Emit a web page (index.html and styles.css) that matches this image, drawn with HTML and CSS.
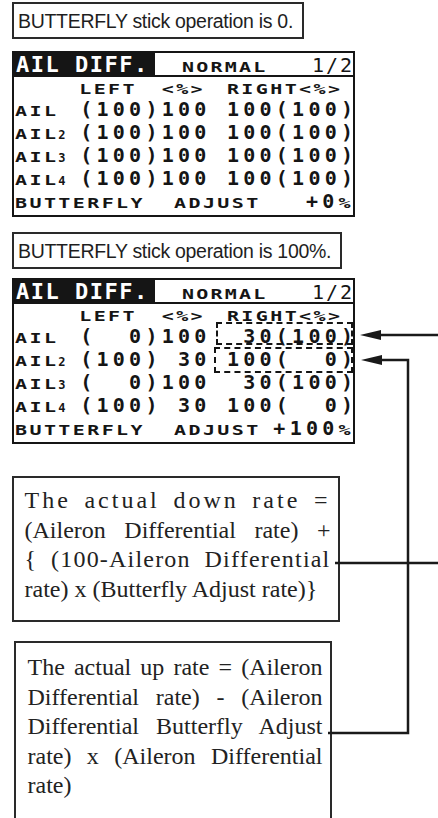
FILE: index.html
```html
<!DOCTYPE html>
<html lang="en">
<head>
    <meta charset="UTF-8">
    <meta name="viewport" content="width=device-width, initial-scale=1.0">
    <title>AIL DIFF. Butterfly adjust</title>
    <link rel="stylesheet" href="styles.css">
</head>
<body>
    <div class="page">
        <div class="note">BUTTERFLY stick operation is 0.</div>

        <div class="lcd">
            <div class="lcd-head">
                <span class="title">AIL DIFF.</span>
                <span class="mode"><span class="lb">NORMAL</span></span>
                <span class="pageno">1/2</span>
            </div>
            <div class="row row-top"><span class="lb lead">LEFT</span><span class="lb pct">&lt;%&gt;</span><span class="lb">RIGHT&lt;%&gt;</span></div>
            <div class="row"><span class="tag"><span class="lb">AIL</span></span>(100)100 100(100)</div>
            <div class="row"><span class="tag"><span class="lb">AIL</span><span class="xs">2</span></span>(100)100 100(100)</div>
            <div class="row"><span class="tag"><span class="lb">AIL</span><span class="xs">3</span></span>(100)100 100(100)</div>
            <div class="row"><span class="tag"><span class="lb">AIL</span><span class="xs">4</span></span>(100)100 100(100)</div>
            <div class="row bf-row"><span class="lb bf-name">BUTTERFLY</span><span class="lb">ADJUST</span><span class="value">+0<span class="lb">%</span></span></div>
        </div>

        <div class="note note-second">BUTTERFLY stick operation is 100%.</div>

        <div class="lcd">
            <div class="lcd-head">
                <span class="title">AIL DIFF.</span>
                <span class="mode"><span class="lb">NORMAL</span></span>
                <span class="pageno">1/2</span>
            </div>
            <div class="row row-top"><span class="lb lead">LEFT</span><span class="lb pct">&lt;%&gt;</span><span class="lb">RIGHT&lt;%&gt;</span></div>
            <div class="row"><span class="tag"><span class="lb">AIL</span></span>(  0)100  30(100)</div>
            <div class="row"><span class="tag"><span class="lb">AIL</span><span class="xs">2</span></span>(100) 30 100(  0)</div>
            <div class="row"><span class="tag"><span class="lb">AIL</span><span class="xs">3</span></span>(  0)100  30(100)</div>
            <div class="row"><span class="tag"><span class="lb">AIL</span><span class="xs">4</span></span>(100) 30 100(  0)</div>
            <div class="row bf-row"><span class="lb bf-name">BUTTERFLY</span><span class="lb">ADJUST</span><span class="value">+100<span class="lb">%</span></span></div>

            <!-- dashed marks around the right-hand values -->
            <div class="mark mark-down"></div>
            <div class="mark mark-up"></div>
        </div>

        <div class="box box-down">
            <span class="line line-wide">The actual down rate =</span>
            <span class="line">(Aileron Differential rate) +</span>
            <span class="line line-mid">{ (100-Aileron Differential</span>
            <span class="last">rate) x (Butterfly Adjust rate)}</span>
        </div>

        <div class="box box-up">
            <span class="line">The actual up rate = (Aileron</span>
            <span class="line">Differential rate) - (Aileron</span>
            <span class="line">Differential Butterfly Adjust</span>
            <span class="line">rate) x (Aileron Differential</span>
            <span class="last">rate)</span>
        </div>
    </div>

    <!-- leader lines from the explanations to the marked values -->
    <svg class="leaders" width="438" height="818" viewBox="0 0 438 818">
        <polygon points="360,335 381,330 381,340" />
        <line x1="380" y1="335" x2="438" y2="335" />
        <polygon points="361,360 382,355 382,365" />
        <polyline points="381,360 408,360 408,733 328,733" />
        <line x1="335" y1="563" x2="438" y2="563" />
    </svg>
</body>
</html>
```

FILE: styles.css
```css
:root {
    --cell: 16.3px;
    --ink: #151515;
}
body {
    margin: 0;
    background: #fff;
    color: #222;
    position: relative;
}
.page {
    padding: 2px 0 0 12px;
    height: 816px;
    overflow: hidden;
}
.note {
    width: fit-content;
    border: 2.5px solid #2a2a2a;
    padding: 0 9px 0 4px;
    height: 33px;
    line-height: 34px;
    font-family: "Liberation Sans", Arial, sans-serif;
    font-size: 19.5px;
    letter-spacing: -0.3px;
    color: #1e1e1e;
}
.note-second {
    margin-top: 15px;
}
.lcd {
    position: relative;
    width: 339px;
    margin-top: 12px;
    border: 2px solid var(--ink);
    padding-bottom: 2px;
    color: var(--ink);
}
.note-second + .lcd {
    margin-top: 9px;
}
.lcd-head {
    display: flex;
    align-items: baseline;
    height: 22px;
    border-bottom: 2px solid var(--ink);
    font-family: "DejaVu Sans Mono", monospace;
}
.title {
    width: 139px;
    height: 22px;
    padding-left: 2px;
    background: var(--ink);
    color: #fff;
    font-weight: bold;
    font-size: 22px;
    line-height: 23px;
    letter-spacing: 1.5px;
}
.mode {
    flex: 1;
    padding-left: 27px;
    font-weight: bold;
}
.mode .lb {
    letter-spacing: 2.2px;
}
.pageno {
    font-size: 20px;
    letter-spacing: 2px;
    margin-right: -1px;
}
.row {
    height: 23px;
    line-height: 23px;
    padding-left: 1px;
    white-space: pre;
    font-family: "DejaVu Sans Mono", monospace;
    font-weight: bold;
    font-size: 20px;
    letter-spacing: calc(var(--cell) - 0.602em);
}
.row-top {
    height: 21px;
    line-height: 21px;
}
/* small LCD letters: wide glyphs, squashed in height */
.lb {
    display: inline-block;
    font-size: 20px;
    line-height: 23px;
    letter-spacing: 2.4px;
    transform: scaleY(0.74);
    transform-origin: 0 18.4px;
}
.row-top .lb {
    line-height: 21px;
    transform-origin: 0 17.4px;
}
.lead {
    box-sizing: border-box;
    width: calc(9 * var(--cell));
    padding-left: calc(4 * var(--cell) - 1px);
}
.pct {
    width: calc(4 * var(--cell));
}
.tag {
    display: inline-block;
    width: calc(4 * var(--cell));
}
.xs {
    font-size: 12px;
    letter-spacing: 0;
}
.bf-row {
    display: flex;
    align-items: baseline;
}
.bf-name {
    width: 159px;
}
.value {
    margin-left: auto;
}
.mark {
    position: absolute;
    border: 2.5px dashed var(--ink);
}
.mark-down {
    left: 202px;
    top: 42px;
    width: 133px;
    height: 19px;
}
.mark-up {
    left: 200px;
    top: 67px;
    width: 135px;
    height: 22px;
}
.box {
    border: 2.5px solid #2a2a2a;
    font-family: "Liberation Serif", "Times New Roman", serif;
    font-size: 24px;
    line-height: 29.5px;
    color: #222;
}
.box-down {
    width: 306px;
    margin-top: 32px;
    padding: 8px 7.5px 16px 10.5px;
}
.box-up {
    width: 295px;
    margin: 19px 0 0 2px;
    padding: 10px 7.5px 40px 11.5px;
}
.line,
.last {
    display: block;
}
.line {
    text-align: justify;
    text-align-last: justify;
}
.line-wide {
    letter-spacing: 3px;
}
.line-mid {
    letter-spacing: 1.2px;
    word-spacing: -4px;
}
.leaders {
    position: absolute;
    top: 0;
    left: 0;
    pointer-events: none;
}
.leaders polygon {
    fill: #1a1a1a;
}
.leaders line,
.leaders polyline {
    fill: none;
    stroke: #1a1a1a;
    stroke-width: 2.5;
}
```
